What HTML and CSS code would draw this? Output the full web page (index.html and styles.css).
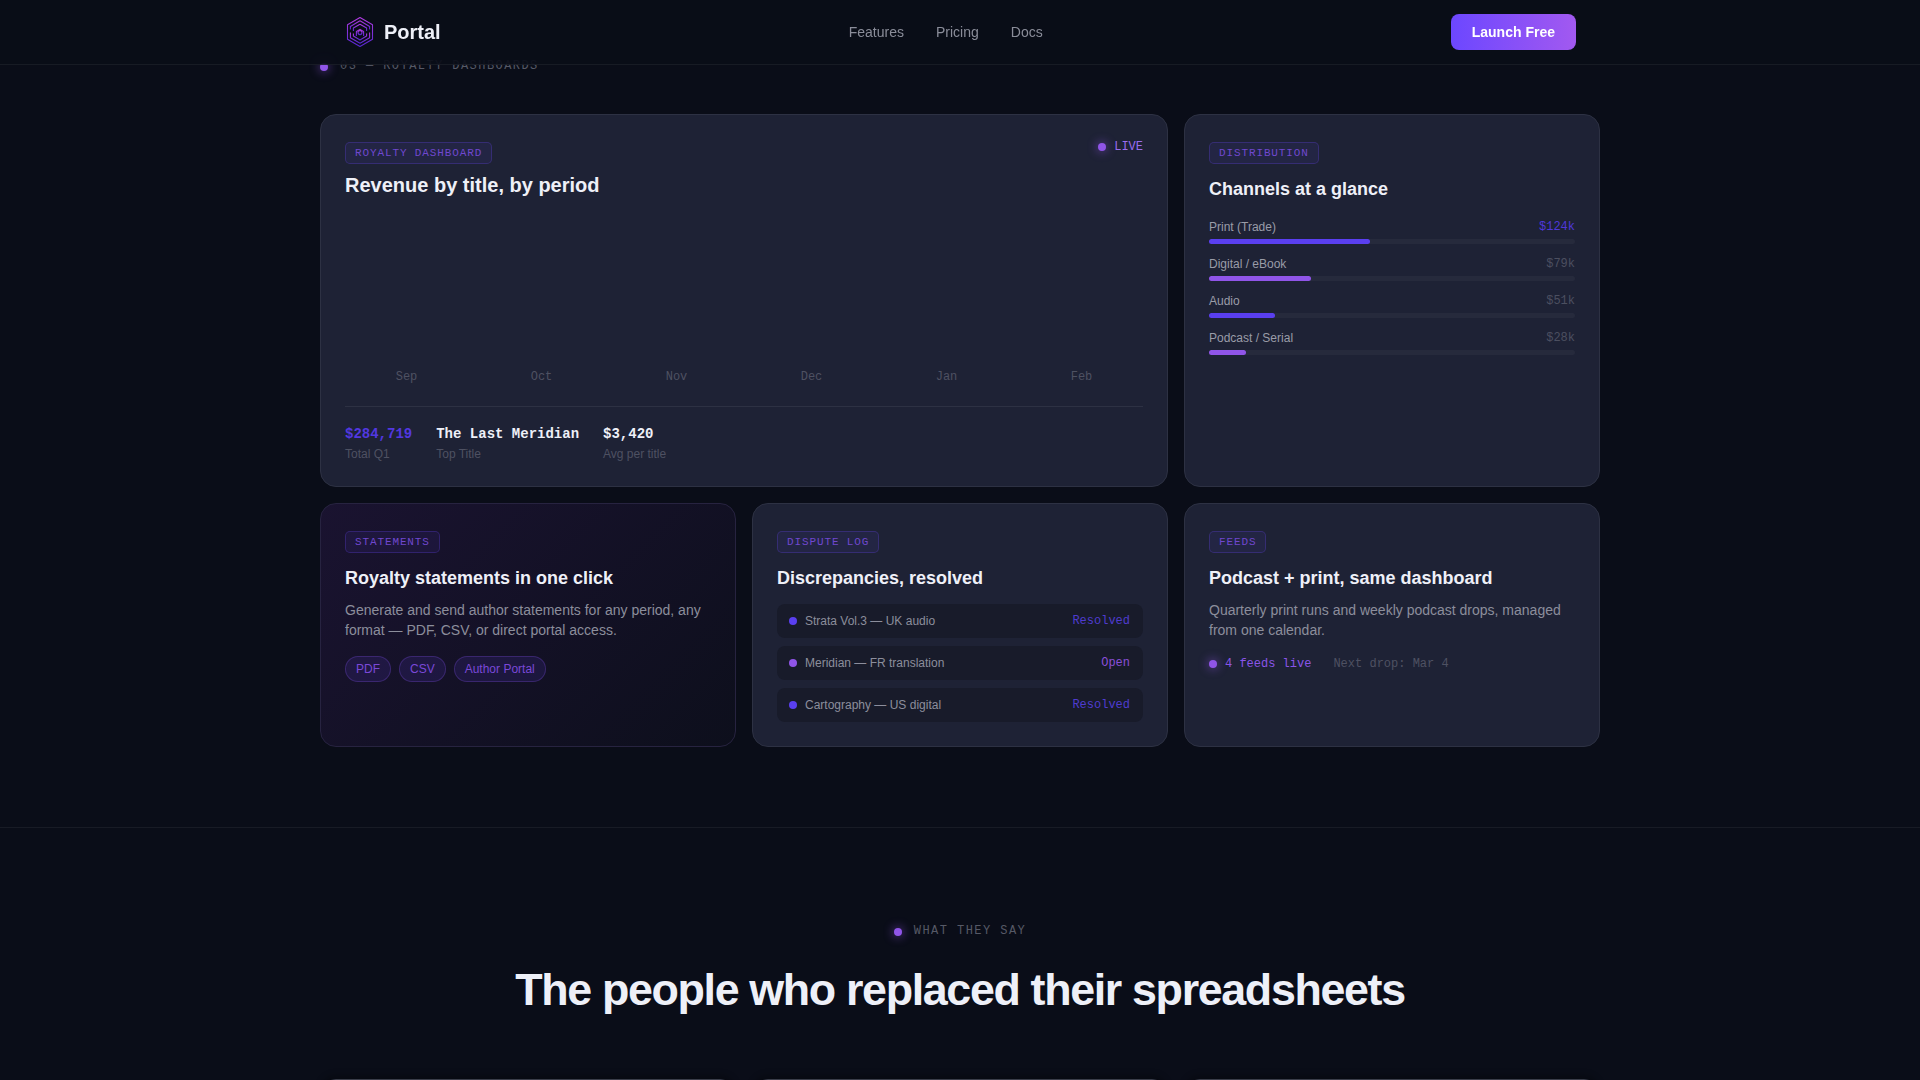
FILE: index.html
```html
<!DOCTYPE html>
<html lang="en">
<head>
<meta charset="utf-8">
<title>Portal</title>
<link rel="stylesheet" href="styles.css">
</head>
<body>
<header class="nav">
  <div class="nav-inner">
    <a class="brand" href="#">
      <svg class="brand-mark" viewBox="0 0 32 32" width="32" height="32" fill="none" aria-hidden="true">
        <defs>
          <linearGradient id="lg" x1="0" y1="0" x2="0" y2="1">
            <stop offset="0" stop-color="#b03be0"/>
            <stop offset="1" stop-color="#5526d0"/>
          </linearGradient>
        </defs>
        <g stroke="url(#lg)" stroke-width="1.1" stroke-linejoin="round">
          <path d="M16 1.5 28.5 8.7v14.6L16 30.5 3.5 23.3V8.7z"/>
          <path d="M16 4.8 25.6 10.4v3.2M6.4 13.6v-3.2L16 4.8"/>
          <path d="M16 8.2 22.6 12v3M9.4 15v-3L16 8.2"/>
          <path d="M6.4 16.5v5.2L16 27.2l9.6-5.5v-5.2"/>
          <path d="M9.4 17.5v2.6L16 23.9l6.6-3.8v-2.6"/>
          <path d="M12.4 20v-4.5l3.6-2.1 3.6 2.1V20"/>
          <circle cx="16" cy="16.6" r="2"/>
        </g>
      </svg>
      <span class="brand-name">Portal</span>
    </a>
    <nav class="nav-links">
      <a href="#">Features</a>
      <a href="#">Pricing</a>
      <a href="#">Docs</a>
    </nav>
    <a class="cta" href="#">Launch Free</a>
  </div>
</header>

<main>
  <section class="section section-bento">
    <div class="wrap">
      <div class="eyebrow"><i class="glow-dot"></i><span>03 — ROYALTY DASHBOARDS</span></div>
      <div class="bento">
        <article class="card card-wide">
          <div class="live"><i class="glow-dot"></i>LIVE</div>
          <span class="tag">ROYALTY DASHBOARD</span>
          <h3 class="title title-lg">Revenue by title, by period</h3>
          <div class="chart">
            <span>Sep</span><span>Oct</span><span>Nov</span><span>Dec</span><span>Jan</span><span>Feb</span>
          </div>
          <div class="stats">
            <div class="stat"><b class="accent">$284,719</b><small>Total Q1</small></div>
            <div class="stat"><b>The Last Meridian</b><small>Top Title</small></div>
            <div class="stat"><b>$3,420</b><small>Avg per title</small></div>
          </div>
        </article>

        <article class="card">
          <span class="tag">DISTRIBUTION</span>
          <h3 class="title title-channels">Channels at a glance</h3>
          <div class="channels">
            <div class="channel">
              <div class="channel-head"><span>Print (Trade)</span><em class="first">$124k</em></div>
              <div class="track"><div class="fill" style="width:44%"></div></div>
            </div>
            <div class="channel">
              <div class="channel-head"><span>Digital / eBook</span><em>$79k</em></div>
              <div class="track"><div class="fill violet" style="width:28%"></div></div>
            </div>
            <div class="channel">
              <div class="channel-head"><span>Audio</span><em>$51k</em></div>
              <div class="track"><div class="fill" style="width:18%"></div></div>
            </div>
            <div class="channel">
              <div class="channel-head"><span>Podcast / Serial</span><em>$28k</em></div>
              <div class="track"><div class="fill violet" style="width:10%"></div></div>
            </div>
          </div>
        </article>

        <article class="card card-dark">
          <span class="tag">STATEMENTS</span>
          <h3 class="title">Royalty statements in one click</h3>
          <p class="desc">Generate and send author statements for any period, any format — PDF, CSV, or direct portal access.</p>
          <div class="pills"><span>PDF</span><span>CSV</span><span>Author Portal</span></div>
        </article>

        <article class="card">
          <span class="tag">DISPUTE LOG</span>
          <h3 class="title">Discrepancies, resolved</h3>
          <ul class="log">
            <li><i class="dot"></i><span>Strata Vol.3 — UK audio</span><em>Resolved</em></li>
            <li><i class="dot violet"></i><span>Meridian — FR translation</span><em class="open">Open</em></li>
            <li><i class="dot"></i><span>Cartography — US digital</span><em>Resolved</em></li>
          </ul>
        </article>

        <article class="card">
          <span class="tag">FEEDS</span>
          <h3 class="title">Podcast + print, same dashboard</h3>
          <p class="desc">Quarterly print runs and weekly podcast drops, managed from one calendar.</p>
          <div class="feeds"><i class="glow-dot"></i><span class="feeds-live">4 feeds live</span><span class="feeds-next">Next drop: Mar 4</span></div>
        </article>
      </div>
    </div>
  </section>

  <section class="section section-quotes">
    <div class="wrap">
      <div class="eyebrow eyebrow-center"><i class="glow-dot"></i><span>WHAT THEY SAY</span></div>
      <h2 class="headline">The people who replaced their spreadsheets</h2>
      <div class="quotes">
        <div class="quote"></div>
        <div class="quote"></div>
        <div class="quote"></div>
      </div>
    </div>
  </section>
</main>
</body>
</html>
```

FILE: styles.css
```css
* { box-sizing: border-box; }
html, body { margin: 0; height: 100%; overflow: hidden; }
body {
  background: #0a0d18;
  color: #eef0f8;
  font-family: "Liberation Sans", Arial, sans-serif;
}
a { color: inherit; text-decoration: none; }
i, em { font-style: normal; }

.nav {
  position: fixed;
  top: 0; left: 0; right: 0;
  z-index: 10;
  height: 65px;
  background: rgba(10, 13, 24, 0.92);
  border-bottom: 1px solid rgba(255, 255, 255, 0.06);
}
.nav-inner {
  max-width: 1280px;
  height: 64px;
  margin: 0 auto;
  padding: 0 24px;
  display: flex;
  align-items: center;
  justify-content: space-between;
}
.brand { display: flex; align-items: center; gap: 8px; }
.brand-mark { display: block; }
.brand-name { font-size: 20px; font-weight: 700; color: #eef0f8; }
.nav-links { display: flex; gap: 32px; font-size: 14px; color: #8a8d99; }
.cta {
  display: block;
  height: 36px;
  line-height: 36px;
  padding: 0 21px;
  border-radius: 8px;
  background: linear-gradient(90deg, #6c47ff, #a259f0);
  color: #fff;
  font-size: 14px;
  font-weight: 700;
}

.wrap { max-width: 1280px; margin: 0 auto; }
.section-bento { padding: 60px 0 80px; border-bottom: 1px solid rgba(255, 255, 255, 0.06); }
.section-quotes { padding-top: 97px; }

.eyebrow {
  display: flex;
  align-items: center;
  gap: 12px;
  height: 13px;
  font: 12px/13px "Liberation Mono", monospace;
  letter-spacing: 0.12em;
  color: #565966;
}
.eyebrow-center { justify-content: center; }
.glow-dot {
  display: block;
  flex: none;
  width: 8px;
  height: 8px;
  border-radius: 50%;
  background: #9055e8;
  box-shadow: 0 0 10px 2px rgba(144, 85, 232, 0.4);
}

.bento {
  display: grid;
  grid-template-columns: repeat(3, 1fr);
  gap: 16px;
  margin-top: 41px;
}
.card {
  position: relative;
  display: flex;
  flex-direction: column;
  align-items: flex-start;
  padding: 27px 24px 24px;
  background: #1e2235;
  border: 1px solid #2d3143;
  border-radius: 16px;
}
.card-wide { grid-column: span 2; }
.card-dark {
  background: linear-gradient(135deg, #1a1330 0%, #0d0f1c 100%);
  border-color: #272340;
}

.tag {
  display: block;
  padding: 4px 9px;
  font: 11px/12px "Liberation Mono", monospace;
  letter-spacing: 0.08em;
  color: #7048cf;
  background: rgba(108, 71, 255, 0.08);
  border: 1px solid rgba(108, 71, 255, 0.25);
  border-radius: 5px;
}
.title {
  margin: 14px 0 0;
  font-size: 18px;
  line-height: 22px;
  font-weight: 700;
  color: #eef0f8;
}
.title-lg { margin-top: 9px; font-size: 20px; line-height: 24px; }
.desc {
  margin: 11px 0 0;
  font-size: 14px;
  line-height: 20px;
  color: #8c8e9c;
}

.live {
  position: absolute;
  top: 25px;
  right: 24px;
  display: flex;
  align-items: center;
  gap: 8px;
  font: 12px/14px "Liberation Mono", monospace;
  color: #9a6df0;
}

.chart {
  align-self: stretch;
  display: flex;
  gap: 12px;
  height: 187px;
  align-items: flex-end;
  font: 12px/14px "Liberation Mono", monospace;
  color: #4e5162;
  text-align: center;
}
.chart span { flex: 1; }
.stats {
  align-self: stretch;
  display: flex;
  gap: 24px;
  margin-top: 22px;
  padding-top: 18px;
  border-top: 1px solid #2d3143;
}
.stat b {
  display: block;
  font: 700 14px/18px "Liberation Mono", monospace;
  color: #eef0f8;
}
.stat b.accent { color: #5238e0; }
.stat small {
  display: block;
  margin-top: 3px;
  font-size: 12px;
  line-height: 16px;
  color: #4e5162;
}

.channels {
  align-self: stretch;
  display: flex;
  flex-direction: column;
  gap: 10px;
  margin-top: 17px;
}
.channel-head {
  display: flex;
  justify-content: space-between;
  align-items: center;
  height: 20px;
  margin-bottom: 2px;
  font-size: 12px;
  color: #9a9ca8;
}
.channel-head em { font: 12px/14px "Liberation Mono", monospace; color: #4c4f60; }
.channel-head em.first { color: #4f38d8; }
.track { height: 5px; border-radius: 3px; background: #262a3c; }
.fill { height: 100%; border-radius: 3px; background: #5a3ff0; }
.fill.violet { background: #9055e8; }

.pills { display: flex; gap: 8px; margin-top: 16px; }
.pills span {
  padding: 5px 10px;
  font-size: 12px;
  line-height: 14px;
  color: #7a48d8;
  background: rgba(108, 71, 255, 0.12);
  border: 1px solid rgba(130, 80, 230, 0.28);
  border-radius: 13px;
}

.log {
  align-self: stretch;
  list-style: none;
  margin: 15px 0 0;
  padding: 0;
  display: flex;
  flex-direction: column;
  gap: 8px;
}
.log li {
  display: flex;
  align-items: center;
  gap: 8px;
  height: 34px;
  padding: 0 13px 0 12px;
  background: #181b2a;
  border-radius: 8px;
  font-size: 12px;
  color: #8c8e9c;
}
.log em {
  margin-left: auto;
  font: 12px/14px "Liberation Mono", monospace;
  color: #4f3bcf;
}
.log em.open { color: #8a4fd8; }
.dot { display: block; flex: none; width: 8px; height: 8px; border-radius: 50%; background: #5a3ff0; }
.dot.violet { background: #9055e8; }

.feeds {
  display: flex;
  align-items: center;
  margin-top: 17px;
  font: 12px/14px "Liberation Mono", monospace;
}
.feeds-live { margin-left: 8px; color: #8a55e8; }
.feeds-next { margin-left: 22px; color: #4e5162; }

.headline {
  margin: 23px 0 0;
  text-align: center;
  font-size: 44.8px;
  line-height: 56px;
  font-weight: 700;
  letter-spacing: -0.03em;
  color: #eef0f8;
}
.quotes {
  display: grid;
  grid-template-columns: repeat(3, 1fr);
  gap: 16px;
  margin-top: 62px;
}
.quote {
  height: 220px;
  background: #1e2235;
  border: 1px solid #3a3d4a;
  border-radius: 16px;
  box-shadow: 0 -4px 6px rgba(0, 0, 0, 0.25);
}
```
